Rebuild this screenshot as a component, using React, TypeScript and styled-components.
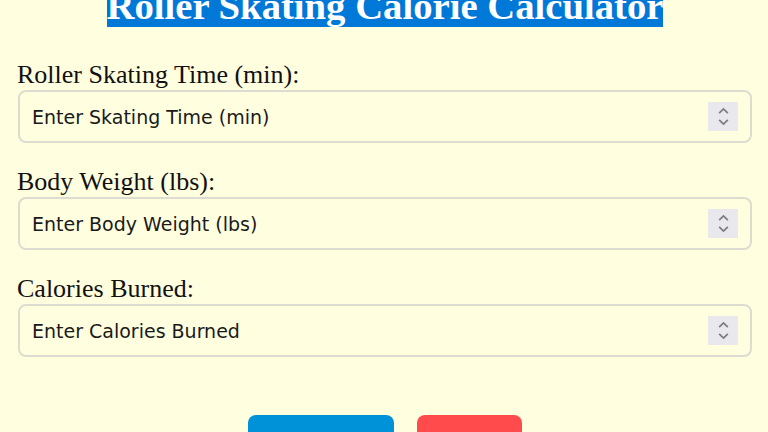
import React from "react";
import styled, { createGlobalStyle } from "styled-components";

const GlobalStyle = createGlobalStyle`
  html, body {
    margin: 0;
    padding: 0;
    background: #ffffe0;
    overflow: hidden;
  }
  body {
    font-family: "Liberation Serif", "Times New Roman", serif;
    color: #111;
  }
`;

const fields = [
  { label: "Roller Skating Time (min):", placeholder: "Enter Skating Time (min)" },
  { label: "Body Weight (lbs):", placeholder: "Enter Body Weight (lbs)" },
  { label: "Calories Burned:", placeholder: "Enter Calories Burned" },
];

const App: React.FC = () => {
  return (
    <Page>
      <GlobalStyle />
      <Title>
        <TitleText>Roller Skating Calorie Calculator</TitleText>
      </Title>
      {fields.map((f) => (
        <Field key={f.label}>
          <Label>{f.label}</Label>
          <InputWrap>
            <Input type="number" placeholder={f.placeholder} />
            <Spinner>
              <Chevron viewBox="0 0 12 8">
                <path d="M2 6.5 L6 2.5 L10 6.5" />
              </Chevron>
              <Chevron viewBox="0 0 12 8">
                <path d="M2 1.5 L6 5.5 L10 1.5" />
              </Chevron>
            </Spinner>
          </InputWrap>
        </Field>
      ))}
      <Actions>
        <Button color="#0092d8" width={146}>Calculate</Button>
        <Button color="#ff4b4b" width={105}>Clear</Button>
      </Actions>
    </Page>
  );
};

const Page = styled.div`
  padding: 0 16px 0 18px;
  margin-top: -16px;
`;

const Title = styled.h1`
  margin: 0 0 32px;
  text-align: center;
  font-size: 38.7px;
  font-weight: bold;
  line-height: normal;
`;

const TitleText = styled.span`
  background: #0078d7;
  color: #fff;
`;

const Field = styled.div`
  margin-bottom: 24px;
`;

const Label = styled.label`
  display: block;
  font-size: 26px;
  line-height: normal;
  margin-left: -1px;
`;

const InputWrap = styled.div`
  position: relative;
`;

const Input = styled.input`
  box-sizing: border-box;
  width: 100%;
  height: 53px;
  padding: 0 12px;
  border: 2px solid #dcdcd0;
  border-radius: 8px;
  background: transparent;
  font-family: "DejaVu Sans", Verdana, sans-serif;
  font-size: 19px;
  color: #111;
  outline: none;
  -moz-appearance: textfield;
  &::placeholder {
    color: #1a1a1a;
  }
  &::-webkit-inner-spin-button,
  &::-webkit-outer-spin-button {
    -webkit-appearance: none;
    margin: 0;
  }
`;

const Spinner = styled.div`
  position: absolute;
  right: 14px;
  top: 12px;
  width: 30px;
  height: 29px;
  background: #e9e9ed;
  display: flex;
  flex-direction: column;
  align-items: center;
  justify-content: center;
  gap: 3px;
  pointer-events: none;
`;

const Chevron = styled.svg`
  width: 13px;
  height: 9px;
  fill: none;
  stroke: #7c7c84;
  stroke-width: 1.6;
`;

const Actions = styled.div`
  display: flex;
  justify-content: center;
  gap: 23px;
  margin-top: 58px;
`;

const Button = styled.button<{ color: string; width: number }>`
  width: ${(p) => p.width}px;
  height: 62px;
  border: none;
  border-radius: 8px;
  background: ${(p) => p.color};
  color: #fff;
  font-family: "Liberation Sans", Arial, sans-serif;
  font-size: 18px;
`;

export default App;
